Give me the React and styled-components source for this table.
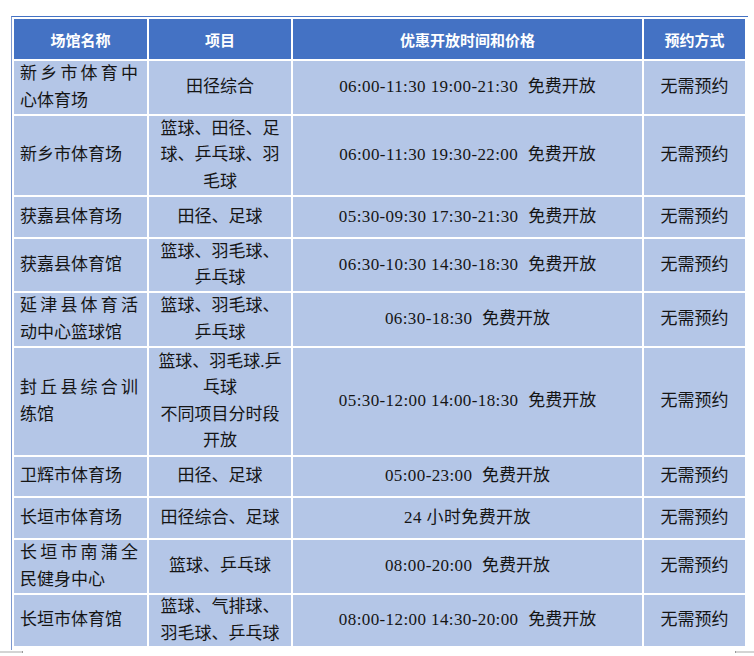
import React from "react";
import styled, { createGlobalStyle } from "styled-components";

const Global = createGlobalStyle`
  html, body { margin: 0; padding: 0; background: #ffffff; }
  body { font-family: "Liberation Serif", "Noto Sans CJK SC", serif; }
`;

const Page = styled.div`
  width: 754px;
  height: 656px;
  overflow: hidden;
  padding-top: 16px;
  box-sizing: border-box;
`;

const Table = styled.div`
  margin-left: 11px;
  width: 737px;
  box-sizing: border-box;
  border-top: 1px solid #4472c4;
  border-left: 1px solid #7d98cf;
  padding: 2px 0 4px 2px;
  display: grid;
  grid-template-columns: 133px 142px 349px 101px;
  column-gap: 2px;
  row-gap: 2px;
`;

const HeadCell = styled.div`
  height: 40px;
  background: #4472c4;
  color: #ffffff;
  font-family: "Noto Sans CJK SC", sans-serif;
  font-weight: 700;
  font-size: 15px;
  display: flex;
  align-items: center;
  justify-content: center;
`;

const Cell = styled.div`
  background: #b4c6e7;
  color: #151515;
  font-size: 17px;
  line-height: 26.5px;
  display: flex;
  align-items: center;
  justify-content: ${(p) => (p.$align === "justify" ? "flex-start" : "center")};
  padding: ${(p) => (p.$align === "justify" ? "0 9px 0 6px" : "0 7px")};
  box-sizing: border-box;
  height: ${(p) => p.$h}px;
`;

const Text = styled.div`
  width: ${(p) => (p.$align === "justify" ? "100%" : "auto")};
  text-align: ${(p) => p.$align};
  text-justify: inter-character;
  font-family: "Liberation Serif", "Noto Sans CJK SC", serif;
`;

const TimeText = styled(Text)`
  letter-spacing: 0.4px;
`;

const Label = styled.span`
  margin-left: 5px;
  letter-spacing: 0;
`;

const Footer = styled.div`
  display: flex;
  justify-content: space-between;
  margin-top: 1px;
`;

const Mark = styled.div`
  width: ${(p) => p.$w}px;
  height: 2px;
  background: #d4d4d4;
  border-${(p) => p.$side}: 1px solid #9a9a9a;
`;

const headers = ["场馆名称", "项目", "优惠开放时间和价格", "预约方式"];

const rows = [
  { h: 53, name: "新乡市体育中心体育场", item: ["田径综合"], time: "06:00-11:30 19:00-21:30", label: "免费开放" },
  { h: 79, name: "新乡市体育场", item: ["篮球、田径、足球、乒乓球、羽毛球"], time: "06:00-11:30 19:30-22:00", label: "免费开放" },
  { h: 40, name: "获嘉县体育场", item: ["田径、足球"], time: "05:30-09:30 17:30-21:30", label: "免费开放" },
  { h: 52, name: "获嘉县体育馆", item: ["篮球、羽毛球、乒乓球"], time: "06:30-10:30 14:30-18:30", label: "免费开放" },
  { h: 53, name: "延津县体育活动中心篮球馆", item: ["篮球、羽毛球、乒乓球"], time: "06:30-18:30", label: "免费开放" },
  { h: 107, name: "封丘县综合训练馆", item: ["篮球、羽毛球.乒乓球", "不同项目分时段开放"], time: "05:30-12:00 14:00-18:30", label: "免费开放" },
  { h: 39, name: "卫辉市体育场", item: ["田径、足球"], time: "05:00-23:00", label: "免费开放" },
  { h: 40, name: "长垣市体育场", item: ["田径综合、足球"], time: "24 小时免费开放", label: "" },
  { h: 53, name: "长垣市南蒲全民健身中心", item: ["篮球、乒乓球"], time: "08:00-20:00", label: "免费开放" },
  { h: 51, name: "长垣市体育馆", item: ["篮球、气排球、羽毛球、乒乓球"], time: "08:00-12:00 14:30-20:00", label: "免费开放" },
];

export default function App() {
  return (
    <Page>
      <Global />
      <Table>
        {headers.map((t) => (
          <HeadCell key={t}>{t}</HeadCell>
        ))}
        {rows.map((r) => (
          <React.Fragment key={r.name}>
            <Cell $h={r.h} $align="justify">
              <Text $align="justify">{r.name}</Text>
            </Cell>
            <Cell $h={r.h} $align="center">
              <Text $align="center">
                {r.item.map((s) => (
                  <div key={s}>{s}</div>
                ))}
              </Text>
            </Cell>
            <Cell $h={r.h} $align="center">
              <TimeText $align="center">
                {r.time}
                {r.label ? <> <Label>{r.label}</Label></> : null}
              </TimeText>
            </Cell>
            <Cell $h={r.h} $align="center">
              <Text $align="center">无需预约</Text>
            </Cell>
          </React.Fragment>
        ))}
      </Table>
      <Footer>
        <Mark $w={22} $side="right" />
        <Mark $w={18} $side="left" />
      </Footer>
    </Page>
  );
}
